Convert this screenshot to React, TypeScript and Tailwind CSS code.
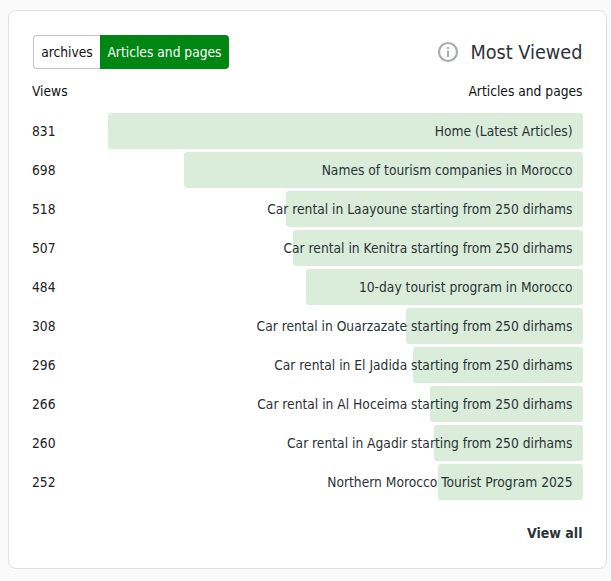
import React from 'react';

const rows = [
  { views: 831, title: 'Home (Latest Articles)' },
  { views: 698, title: 'Names of tourism companies in Morocco' },
  { views: 518, title: 'Car rental in Laayoune starting from 250 dirhams' },
  { views: 507, title: 'Car rental in Kenitra starting from 250 dirhams' },
  { views: 484, title: '10-day tourist program in Morocco' },
  { views: 308, title: 'Car rental in Ouarzazate starting from 250 dirhams' },
  { views: 296, title: 'Car rental in El Jadida starting from 250 dirhams' },
  { views: 266, title: 'Car rental in Al Hoceima starting from 250 dirhams' },
  { views: 260, title: 'Car rental in Agadir starting from 250 dirhams' },
  { views: 252, title: 'Northern Morocco Tourist Program 2025' },
];

const InfoIcon = () => (
  <svg width="22" height="22" viewBox="0 0 22 22" fill="none" className="text-[#a9acb0]">
    <circle cx="11" cy="11" r="9" stroke="currentColor" strokeWidth="2.2" />
    <rect x="10" y="9.5" width="2" height="6.5" fill="currentColor" />
    <rect x="10" y="6" width="2" height="2" fill="currentColor" />
  </svg>
);

export default function App() {
  return (
    <div className="min-h-[581px] bg-[#fafafa] pt-[10px] pl-2 pr-1 font-['DejaVu_Sans_Condensed','DejaVu_Sans',sans-serif] text-[13.7px] text-[#222]">
      <div className="h-[559px] w-[598.5px] rounded-lg border border-[#e0e0e0] bg-white px-[23px] pt-6">
        <div className="flex items-center justify-between">
          <div className="ml-px flex h-[34px]">
            <div className="flex w-[67px] items-center justify-center rounded-l border border-r-0 border-[#c4c4c4] text-[#111]">archives</div>
            <div className="flex w-[129px] items-center justify-center rounded-r bg-[#008612] text-white">Articles and pages</div>
          </div>
          <div className="flex items-center gap-[11px]">
            <InfoIcon />
            <span className="pt-[2px] text-[19.7px] text-[#2c3338]">Most Viewed</span>
          </div>
        </div>
        <div className="mt-[12px] flex justify-between text-[#111]">
          <span>Views</span>
          <span>Articles and pages</span>
        </div>
        <div className="mt-[11px] flex flex-col gap-[3px]">
          {rows.map((r) => (
            <div key={r.views} className="flex h-9 items-center">
              <span className="w-[75.5px] shrink-0 pt-[2px]">{r.views}</span>
              <div className="relative flex h-full flex-1 items-center justify-end pr-[10px]">
                <div
                  className="absolute top-0 right-0 h-full rounded-[3px] bg-[#d9edda]"
                  style={{ width: `${(r.views / 831) * 100}%` }}
                />
                <span className="relative whitespace-nowrap pt-[2px] text-[#2c3338]">{r.title}</span>
              </div>
            </div>
          ))}
        </div>
        <div className="mt-[23px] text-right text-[14px] font-bold text-[#2c3338]">View all</div>
      </div>
    </div>
  );
}
